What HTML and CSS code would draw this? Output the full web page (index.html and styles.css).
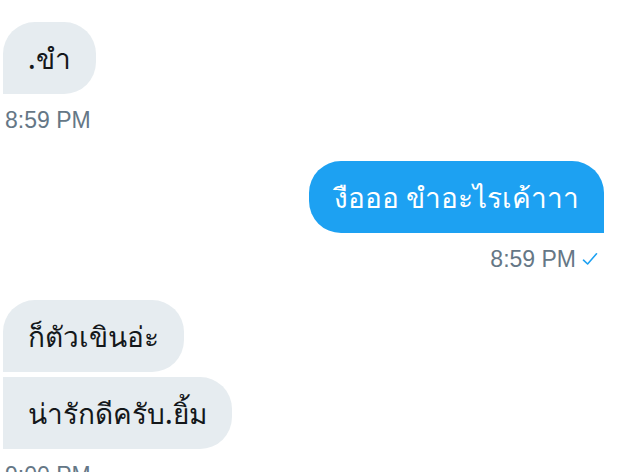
FILE: index.html
```html
<!DOCTYPE html>
<html lang="th">
<head>
<meta charset="utf-8">
<link rel="stylesheet" href="styles.css">
</head>
<body>
<div class="chat">
  <div class="group in">
    <div class="bubble first last">.ขำ</div>
    <div class="time">8:59 PM</div>
  </div>
  <div class="group out">
    <div class="bubble first last">งือออ ขำอะไรเค้าาา</div>
    <div class="time">8:59 PM <svg class="check" viewBox="0 0 16 16" width="16" height="16"><path d="M1.5 9.2 L5.6 13 L14.5 2.8" fill="none" stroke="#1da1f2" stroke-width="1.6" stroke-linecap="round" stroke-linejoin="round"/></svg></div>
  </div>
  <div class="group in">
    <div class="bubble first">ก็ตัวเขินอ่ะ</div>
    <div class="bubble last">น่ารักดีครับ.ยิ้ม</div>
    <div class="time">9:00 PM</div>
  </div>
</div>
</body>
</html>
```
FILE: styles.css
```css
html, body {
  margin: 0;
  padding: 0;
  background: #ffffff;
}
body {
  font-family: "Liberation Sans", "Noto Sans", sans-serif;
  width: 636px;
  height: 472px;
  overflow: hidden;
}
.chat {
  display: flex;
  flex-direction: column;
  gap: 29px;
  padding: 22px 32px 0 3px;
}
.group {
  display: flex;
  flex-direction: column;
  gap: 5px;
}
.group.in { align-items: flex-start; }
.group.out { align-items: flex-end; }
.bubble {
  font-family: "Noto Sans", "Liberation Sans", sans-serif;
  font-size: 28px;
  font-weight: 500;
  line-height: 36px;
  padding: 18px 25px;
  color: #14171a;
  background: #e6ecf0;
  border-radius: 32px;
}
.in .bubble { border-top-left-radius: 0; border-bottom-left-radius: 0; }
.in .bubble.first { border-top-left-radius: 32px; }
.out .bubble {
  background: #1da1f2;
  color: #ffffff;
  border-bottom-right-radius: 0;
}
.time {
  margin-top: 9px;
  font-size: 23px;
  line-height: 24px;
  color: #657786;
  display: flex;
  align-items: center;
  gap: 6px;
}
.in .time { padding-left: 2px; }
.out .time { padding-right: 6px; }
.check { display: block; }
```
